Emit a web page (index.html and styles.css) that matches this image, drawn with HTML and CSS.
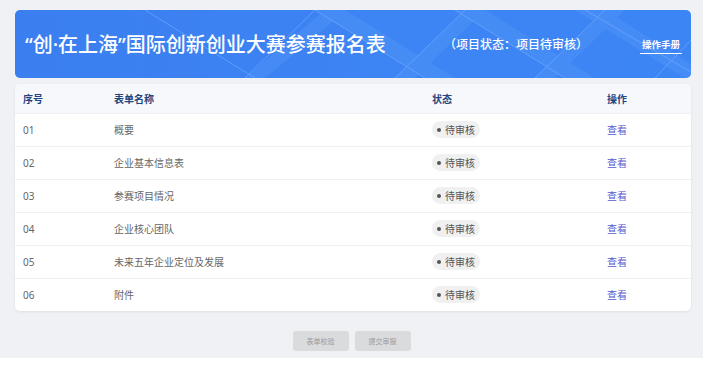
FILE: index.html
```html
<!DOCTYPE html>
<html lang="zh-CN">
<head>
    <meta charset="UTF-8">
    <title>参赛报名表</title>
    <link rel="stylesheet" href="styles.css">
</head>
<body>
    <div class="pagina">
        <div class="banner">
            <svg class="banner-bg" width="676" height="68" viewBox="0 0 676 68">
                <g fill="#4f93f8" opacity="0.55">
                    <polygon points="300,0 330,0 440,68 410,68" />
                    <polygon points="440,0 470,0 580,68 550,68" />
                    <polygon points="560,0 590,0 676,54 676,72" />
                    <polygon points="230,68 250,68 320,10 310,0" />
                    <polygon points="380,68 400,68 470,0 450,0" />
                    <polygon points="520,68 540,68 610,0 590,0" />
                </g>
                <g stroke="#78aefc" stroke-width="1" fill="none" opacity="0.6">
                    <path d="M130 0 L240 68" />
                    <path d="M230 68 L300 0" />
                    <path d="M300 0 L410 68" />
                    <path d="M380 68 L450 0" />
                    <path d="M440 0 L550 68" />
                    <path d="M520 68 L590 0" />
                    <path d="M570 0 L676 62" />
                    <path d="M640 68 L676 30" />
                </g>
            </svg>
            <h1 class="titulo">“创·在上海”国际创新创业大赛参赛报名表</h1>
            <span class="estado">（项目状态：项目待审核）</span>
            <a class="manual">操作手册</a>
        </div>

        <div class="quadro">
            <div class="linha cabecalho">
                <div>序号</div>
                <div>表单名称</div>
                <div>状态</div>
                <div>操作</div>
            </div>
            <div class="linha">
                <div>01</div>
                <div>概要</div>
                <div><span class="pilula">待审核</span></div>
                <div><a class="ver">查看</a></div>
            </div>
            <div class="linha">
                <div>02</div>
                <div>企业基本信息表</div>
                <div><span class="pilula">待审核</span></div>
                <div><a class="ver">查看</a></div>
            </div>
            <div class="linha">
                <div>03</div>
                <div>参赛项目情况</div>
                <div><span class="pilula">待审核</span></div>
                <div><a class="ver">查看</a></div>
            </div>
            <div class="linha">
                <div>04</div>
                <div>企业核心团队</div>
                <div><span class="pilula">待审核</span></div>
                <div><a class="ver">查看</a></div>
            </div>
            <div class="linha">
                <div>05</div>
                <div>未来五年企业定位及发展</div>
                <div><span class="pilula">待审核</span></div>
                <div><a class="ver">查看</a></div>
            </div>
            <div class="linha">
                <div>06</div>
                <div>附件</div>
                <div><span class="pilula">待审核</span></div>
                <div><a class="ver">查看</a></div>
            </div>
        </div>

        <div class="botoes">
            <div class="btn">表单校验</div>
            <div class="btn">提交审报</div>
        </div>
    </div>
</body>
</html>
```

FILE: styles.css
```css
* {
    margin: 0;
    padding: 0;
    box-sizing: border-box;
}

body {
    background: #fff;
    font-family: "Noto Sans", "Noto Sans CJK SC", sans-serif;
}

.pagina {
    height: 358px;
    background: #eff1f5;
    padding: 10px 12px 0 15px;
}

.banner {
    position: relative;
    height: 68px;
    border-radius: 5px;
    overflow: hidden;
    background: linear-gradient(90deg, #3a7ef0 0%, #3f86f4 60%, #3d86f5 100%);
    display: flex;
    align-items: center;
    padding: 0 10px;
    color: white;
    white-space: nowrap;
}

.banner-bg {
    position: absolute;
    left: 0;
    top: 0;
}

.titulo {
    position: relative;
    font-size: 20px;
    font-weight: 500;
    width: 419px;
    flex-shrink: 0;
    margin-top: -2px;
}

.estado {
    position: relative;
    font-size: 12px;
    font-weight: 500;
    width: 196px;
    flex-shrink: 0;
}

.manual {
    position: relative;
    flex-shrink: 0;
    font-size: 9.5px;
    font-weight: 700;
    padding: 0 2px 2px 2px;
    border-bottom: 1px solid #fff;
    margin-top: 2px;
}

.quadro {
    margin-top: 6px;
    background: #fff;
    border-radius: 5px;
    overflow: hidden;
    box-shadow: 0 1px 3px rgba(0, 0, 0, 0.08);
}

.linha {
    display: grid;
    grid-template-columns: 91px 318px 175px 1fr;
    align-items: center;
    height: 33px;
    padding-left: 8px;
    padding-bottom: 1px;
    font-size: 10px;
    color: #666;
    border-top: 1px solid #eef0f3;
}

.cabecalho {
    height: 29px;
    border-top: none;
    background: #f7f8fb;
    color: #24457f;
    font-weight: 700;
}

.pilula {
    display: inline-flex;
    align-items: center;
    height: 17px;
    padding: 0 5px;
    border-radius: 9px;
    background: #f0f0f1;
    color: #555;
}

.pilula::before {
    content: "";
    width: 4px;
    height: 4px;
    border-radius: 50%;
    background: #555;
    margin-right: 4px;
}

.ver {
    color: #5a5ad0;
}

.botoes {
    display: flex;
    justify-content: center;
    gap: 6px;
    margin-top: 20px;
    padding-right: 3px;
}

.btn {
    width: 56px;
    height: 20px;
    border-radius: 3px;
    background: #dadbdd;
    color: #9a9a9a;
    font-size: 7px;
    display: flex;
    align-items: center;
    justify-content: center;
}
```
